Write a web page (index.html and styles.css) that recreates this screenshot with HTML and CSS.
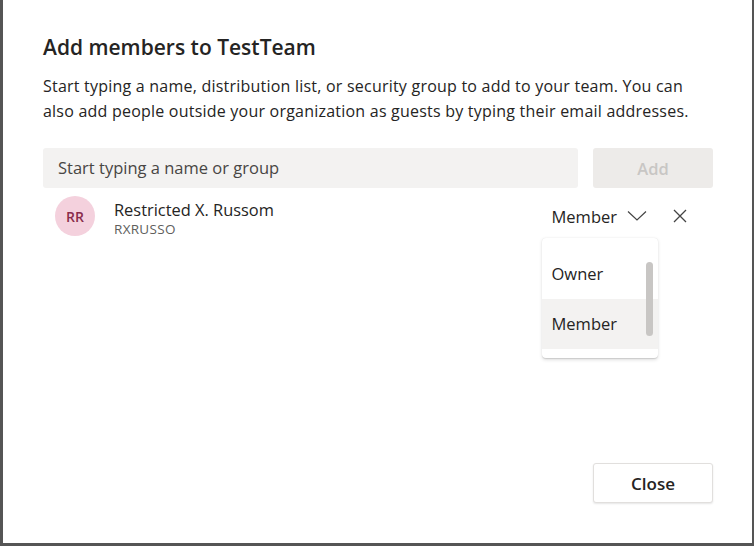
FILE: index.html
```html
<!DOCTYPE html>
<html>
<head>
<meta charset="utf-8">
<link rel="stylesheet" href="styles.css">
</head>
<body>
<div class="dialog">
  <h1 class="title">Add members to TestTeam</h1>
  <p class="desc">Start typing a name, distribution list, or security group to add to your team. You can also add people outside your organization as guests by typing their email addresses.</p>
  <div class="search-row">
    <div class="search">Start typing a name or group</div>
    <button class="add-btn">Add</button>
  </div>
  <div class="member-row">
    <div class="avatar">RR</div>
    <div class="who">
      <div class="name">Restricted X. Russom</div>
      <div class="alias">RXRUSSO</div>
    </div>
    <div class="role">
      <span class="role-label">Member</span>
      <svg class="chev" width="20" height="12" viewBox="0 0 20 12"><path d="M1 1.5 L10 10 L19 1.5" fill="none" stroke="#444" stroke-width="1.2"/></svg>
      <svg class="close-x" width="14" height="14" viewBox="0 0 14 14"><path d="M1 1 L13 13 M13 1 L1 13" fill="none" stroke="#444" stroke-width="1.3"/></svg>
      <div class="menu">
        <div class="menu-item">Owner</div>
        <div class="menu-item selected">Member</div>
        <div class="thumb"></div>
      </div>
    </div>
  </div>
  <div class="spacer"></div>
  <div class="footer">
    <button class="close-btn">Close</button>
  </div>
</div>
</body>
</html>
```
FILE: styles.css
```css
html, body {
  margin: 0;
  padding: 0;
  background: #fff;
}
body {
  font-family: "Open Sans", "Noto Sans", sans-serif;
  color: #252423;
}
.dialog {
  box-sizing: border-box;
  width: 754px;
  height: 546px;
  border-left: 3px solid #555;
  border-right: 2px solid #555;
  border-bottom: 3px solid #555;
  padding: 33px 39px 40px 40px;
  display: flex;
  flex-direction: column;
}
.title {
  margin: 0;
  font-size: 21px;
  font-weight: 600;
  line-height: 28px;
  color: #252423;
}
.desc {
  margin: 13px 0 0 0;
  font-size: 16px;
  line-height: 25px;
  color: #252423;
  letter-spacing: 0.22px;
}
.search-row {
  display: flex;
  gap: 15px;
  margin-top: 24px;
  height: 40px;
}
.search {
  flex: 1;
  background: #f3f2f1;
  border-radius: 3px;
  padding-left: 15px;
  font-size: 16.5px;
  line-height: 40px;
  color: #484644;
}
.add-btn {
  width: 120px;
  border: none;
  background: #edebe9;
  border-radius: 3px;
  font-family: inherit;
  font-size: 16.5px;
  font-weight: 600;
  color: #c8c6c4;
}
.member-row {
  display: flex;
  align-items: center;
  margin-top: 8px;
  height: 40px;
  padding-left: 12px;
}
.avatar {
  width: 40px;
  height: 40px;
  border-radius: 50%;
  background: #f4d1dd;
  color: #8a2c4c;
  font-size: 14px;
  font-weight: 600;
  display: flex;
  align-items: center;
  justify-content: center;
}
.who {
  margin-left: 19px;
  flex: 1;
  padding-top: 7px;
}
.name {
  font-size: 16.4px;
  line-height: 20px;
  color: #252423;
}
.alias {
  font-size: 13.5px;
  line-height: 19px;
  color: #605e5c;
  letter-spacing: 0.3px;
}
.role {
  position: relative;
  display: flex;
  align-items: center;
  margin-right: 26px;
}
.role-label {
  font-size: 16.5px;
  color: #252423;
}
.chev {
  margin-left: 10px;
}
.close-x {
  margin-left: 26px;
}
.menu {
  position: absolute;
  left: -10px;
  top: 33px;
  width: 116px;
  height: 120px;
  background: #fff;
  border-radius: 4px;
  box-shadow: 0 1.6px 3.6px rgba(0,0,0,0.13), 0 0.3px 0.9px rgba(0,0,0,0.11);
  padding-top: 11px;
  box-sizing: border-box;
}
.menu-item {
  height: 50px;
  line-height: 50px;
  padding-left: 10px;
  font-size: 16.5px;
  color: #252423;
}
.menu-item.selected {
  background: #f3f2f1;
}
.thumb {
  position: absolute;
  left: 104px;
  top: 24px;
  width: 7px;
  height: 74px;
  border-radius: 4px;
  background: #c8c6c4;
}
.spacer {
  flex: 1;
}
.footer {
  display: flex;
  justify-content: flex-end;
}
.close-btn {
  width: 120px;
  height: 40px;
  background: #fff;
  border: 1px solid #e1dfdd;
  border-radius: 3px;
  box-shadow: 0 1px 2px rgba(0,0,0,0.1);
  font-family: inherit;
  font-size: 17px;
  font-weight: 600;
  color: #252423;
}
```
